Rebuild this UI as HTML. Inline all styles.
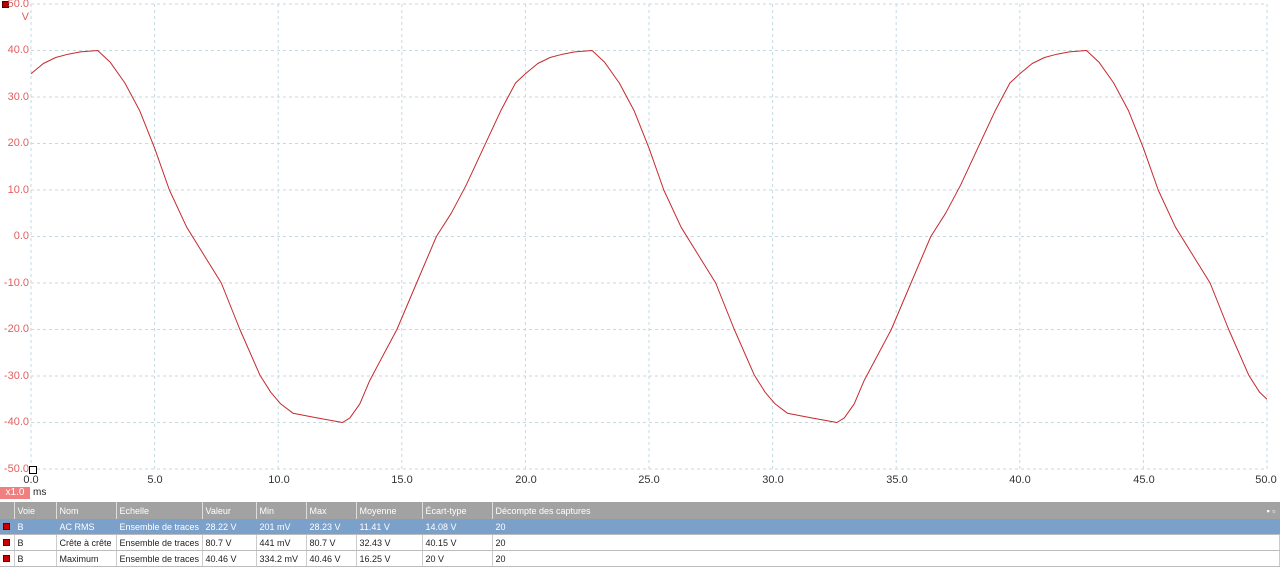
<!DOCTYPE html>
<html><head><meta charset="utf-8"><style>
body{margin:0;width:1280px;height:566px;background:#fff;overflow:hidden;font-family:"Liberation Sans",sans-serif;position:relative}
.yl{position:absolute;right:1251px;color:#e06060;font-size:11px;text-align:right;line-height:12px}
.xl{position:absolute;top:474px;font-size:11px;color:#333;width:40px;text-align:center;line-height:12px}
table{position:absolute;left:0;top:502px;width:1280px;border-collapse:collapse;font-size:9px;color:#222;table-layout:fixed}
td{height:15px;padding:0 0 0 3px;white-space:nowrap;overflow:hidden;border-right:1px solid #ccc;border-bottom:1px solid #bbb}
tr.h td{background:#a2a2a2;color:#fff;height:17px;border-right:1px solid #ddd;border-bottom:none}
tr.s td{background:#7ba0c9;color:#fff;border-right:1px solid #7ba0c9}
.sq{display:inline-block;width:5px;height:5px;background:#c00;border:1px solid #600}
</style></head><body>
<svg id="g" width="1280" height="500" style="position:absolute;left:0;top:0"></svg>
<div style="position:absolute;left:2px;top:1px;width:5px;height:5px;background:#b00;border:1px solid #500"></div>
<div class="yl" style="top:-2px">50.0</div>
<div class="yl" style="top:11px">V</div>
<div class="yl" style="top:44px">40.0</div>
<div class="yl" style="top:91px">30.0</div>
<div class="yl" style="top:137px">20.0</div>
<div class="yl" style="top:184px">10.0</div>
<div class="yl" style="top:230px">0.0</div>
<div class="yl" style="top:277px">-10.0</div>
<div class="yl" style="top:323px">-20.0</div>
<div class="yl" style="top:370px">-30.0</div>
<div class="yl" style="top:416px">-40.0</div>
<div class="yl" style="top:463px">-50.0</div>
<div class="xl" style="left:11px">0.0</div>
<div class="xl" style="left:135px">5.0</div>
<div class="xl" style="left:259px">10.0</div>
<div class="xl" style="left:382px">15.0</div>
<div class="xl" style="left:506px">20.0</div>
<div class="xl" style="left:629px">25.0</div>
<div class="xl" style="left:753px">30.0</div>
<div class="xl" style="left:877px">35.0</div>
<div class="xl" style="left:1000px">40.0</div>
<div class="xl" style="left:1124px">45.0</div>
<div class="xl" style="left:1246px">50.0</div>
<div style="position:absolute;left:29px;top:466px;width:6px;height:6px;border:1px solid #000;background:#fff"></div>
<div style="position:absolute;left:0;top:487px;width:30px;height:12px;background:#f08080;color:#fff;font-size:10px;text-align:center;line-height:12px">x1.0</div>
<div style="position:absolute;left:33px;top:487px;font-size:10px;color:#222;line-height:12px">ms</div>
<table>
<colgroup><col style="width:14px"><col style="width:42px"><col style="width:60px"><col style="width:86px"><col style="width:54px"><col style="width:50px"><col style="width:50px"><col style="width:66px"><col style="width:70px"><col></colgroup>
<tr class="h"><td></td><td>Voie</td><td>Nom</td><td>Echelle</td><td>Valeur</td><td>Min</td><td>Max</td><td>Moyenne</td><td>Écart-type</td><td style="border-right:none">Décompte des captures<span style="float:right;margin-right:4px">▪ ▫</span></td></tr>
<tr class="s"><td><span class="sq"></span></td><td>B</td><td>AC RMS</td><td>Ensemble de traces</td><td>28.22 V</td><td>201 mV</td><td>28.23 V</td><td>11.41 V</td><td>14.08 V</td><td>20</td></tr>
<tr><td><span class="sq"></span></td><td>B</td><td>Crête à crête</td><td>Ensemble de traces</td><td>80.7 V</td><td>441 mV</td><td>80.7 V</td><td>32.43 V</td><td>40.15 V</td><td>20</td></tr>
<tr><td><span class="sq"></span></td><td>B</td><td>Maximum</td><td>Ensemble de traces</td><td>40.46 V</td><td>334.2 mV</td><td>40.46 V</td><td>16.25 V</td><td>20 V</td><td>20</td></tr>
</table>
<script>
var g=document.getElementById('g'),s='';
function X(t){return 31+t*24.72}function Y(v){return 236.5-v*4.65}
for(var i=0;i<=10;i++){var x=X(i*5);s+='<line x1="'+x+'" y1="4" x2="'+x+'" y2="469" stroke="#c6d8e0" stroke-dasharray="3,3"/>';}
for(var j=0;j<=10;j++){var y=4+j*46.5;s+='<line x1="31" y1="'+y+'" x2="1267" y2="'+y+'" stroke="#c6d8e0" stroke-dasharray="3,3"/>';}
var k=[[0,35],[0.5,37.2],[1,38.5],[1.5,39.2],[2,39.7],[2.7,40],[3.2,37.5],[3.8,33],[4.4,27],[5,19],[5.6,10],[6.3,2],[7,-4],[7.7,-10],[8.45,-20],[9.26,-29.8],[9.7,-33.5],[10.1,-36],[10.6,-38],[11.57,-39],[12.6,-40],[12.9,-39],[13.3,-36],[13.7,-31],[14.8,-20],[15.6,-10],[16.4,0],[17,5],[17.6,11],[18.3,19],[19,27],[19.6,33],[20,35]];
var pts=[];
for(var p=0;p<3;p++)for(var q=(p?1:0);q<k.length;q++){var t=k[q][0]+p*20;if(t<=50.01)pts.push([t,k[q][1]]);}
pts.push([50,-35]);
var d='';
for(var q=0;q<pts.length;q++){d+=(q?' L':'M')+X(pts[q][0]).toFixed(1)+','+Y(pts[q][1]).toFixed(1);}
s+='<path d="'+d+'" fill="none" stroke="#c42a2e" stroke-width="1" stroke-linejoin="round"/>';
g.innerHTML=s;
</script>
</body></html>
